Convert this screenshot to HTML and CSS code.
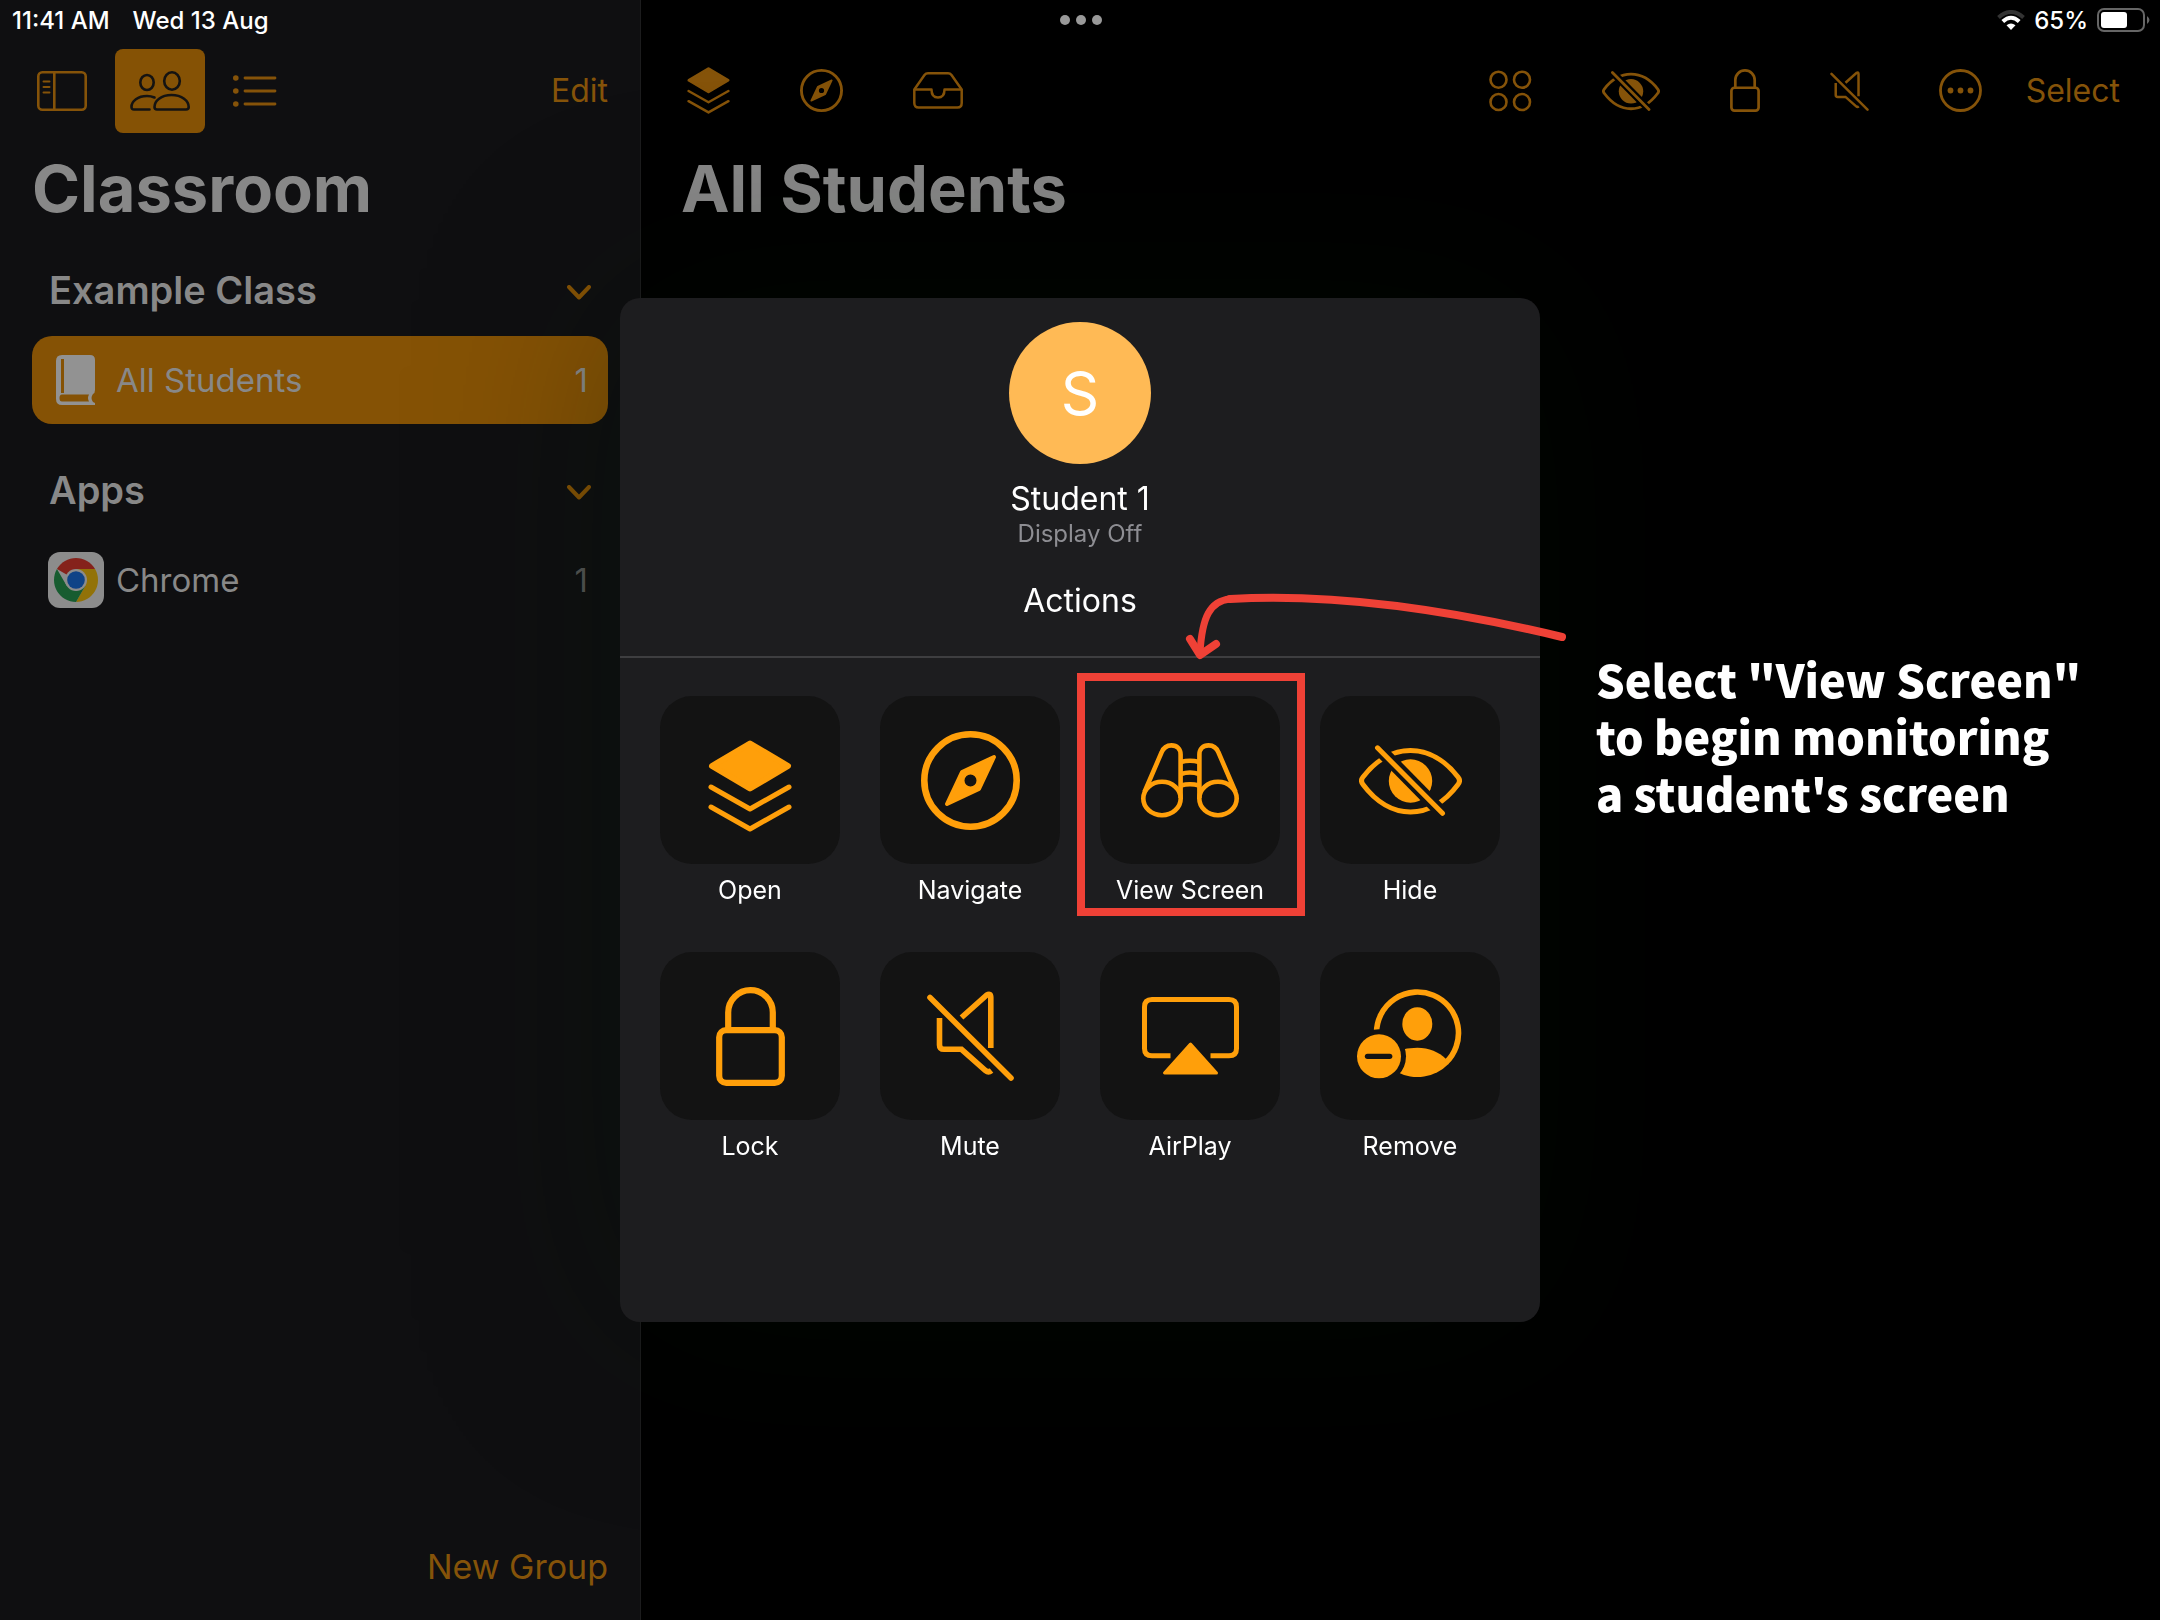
FILE: index.html
```html
<!DOCTYPE html>
<html lang="en">
<head>
    <meta charset="UTF-8">
    <meta name="viewport" content="width=device-width, initial-scale=1.0">
    <title>Classroom</title>
    <link rel="stylesheet" href="styles.css">
</head>
<body>
    <!-- icons used in both the toolbar and the action tiles -->
    <svg class="symbols" aria-hidden="true">
        <symbol id="icon-layers" viewBox="0 0 84 92">
            <path d="M42 3.500 80 26 42 48.500 4 26Z" fill="currentColor" stroke="currentColor" stroke-width="6" stroke-linejoin="round"/>
            <path d="M3 47 42 69 81 47M3 67 42 89 81 67" fill="none" stroke="currentColor" stroke-width="5" stroke-linecap="round" stroke-linejoin="round"/>
        </symbol>
        <symbol id="icon-compass" viewBox="0 0 99 99">
            <circle cx="49.500" cy="49.500" r="46.200" fill="none" stroke="currentColor" stroke-width="6.600"/>
            <path fill-rule="evenodd" d="M73 26 58 58 26 73 41 41ZM49.500 41.500a8 8 0 1 0 0 16 8 8 0 0 0 0-16Z" fill="currentColor" stroke="currentColor" stroke-width="4" stroke-linejoin="round"/>
        </symbol>
        <symbol id="icon-eye" viewBox="0 0 103 71">
            <mask id="eye-gap" maskUnits="userSpaceOnUse" x="0" y="0" width="103" height="71">
                <rect width="103" height="71" fill="#fff"/>
                <path d="M8-8.400 94 79" stroke="#000" stroke-width="13"/>
            </mask>
            <g mask="url(#eye-gap)">
                <path d="M4 39.500C2 37 2 34.500 4 32 17 15 34 5.500 51.500 5.500S86 15 99 32C101 34.500 101 37 99 39.500 86 57 69 67 51.500 67S17 57 4 39.500Z" fill="none" stroke="currentColor" stroke-width="5"/>
                <circle cx="51.500" cy="36" r="21.700" fill="currentColor"/>
            </g>
            <path d="M18.500 2.800 83.500 68.300" stroke="currentColor" stroke-width="5" stroke-linecap="round"/>
        </symbol>
        <symbol id="icon-lock" viewBox="0 0 69 99">
            <rect x="3.200" y="43.200" width="62.600" height="52.600" rx="7" fill="none" stroke="currentColor" stroke-width="6.200"/>
            <path d="M12.200 43V25.500a22.300 22.300 0 0 1 44.600 0V43" fill="none" stroke="currentColor" stroke-width="6.200"/>
        </symbol>
        <symbol id="icon-mute" viewBox="0 0 87 90">
            <g fill="none" stroke="currentColor" stroke-width="5.600">
                <path d="M34.500 26.500 59.500 4.200Q63.800 1.500 63.800 6.500V57"/>
                <path d="M12.500 27V54Q12.500 58.300 17 58.300H34.500L58.500 79.500Q61.500 82 64.500 79.500"/>
                <path d="M3 6.500 84 87" stroke-linecap="round"/>
            </g>
        </symbol>
    </svg>

    <div class="app">
        <header class="status">
            <div class="status-left">
                <span>11:41 AM</span>
                <span>Wed 13 Aug</span>
            </div>
            <div class="dots"><i></i><i></i><i></i></div>
            <div class="status-right">
                <svg width="28" height="20" viewBox="0 0 28 20" fill="none" stroke="#fff" stroke-width="4">
                    <path d="M1.500 7.500Q14-3.500 26.500 7.500" stroke="#333"/>
                    <path d="M5.800 11.500Q14 4 22.200 11.500"/>
                    <path d="M14 20 9.500 15.300Q14 11.800 18.500 15.300Z" fill="#fff" stroke="none"/>
                </svg>
                <span>65%</span>
                <svg width="53" height="24" viewBox="0 0 53 24">
                    <rect x="1" y="1" width="46" height="22" rx="6" fill="none" stroke="#666" stroke-width="2"/>
                    <rect x="4" y="4" width="26" height="16" rx="3" fill="#fff"/>
                    <path d="M50 8q5 4 0 8Z" fill="#666"/>
                </svg>
            </div>
        </header>

        <aside class="sidebar">
            <div class="toolbar">
                <button class="icon-btn" aria-label="Toggle sidebar">
                    <svg width="50" height="40" viewBox="0 0 50 40" fill="none" stroke="currentColor" stroke-width="2.600">
                        <rect x="1.300" y="1.300" width="47.400" height="37.400" rx="4"/>
                        <path d="M17.300 1V39"/>
                        <path d="M6.500 10.500H12.500M6.500 16H12.500M6.500 21.500H12.500" stroke-width="2" stroke-linecap="round"/>
                    </svg>
                </button>
                <button class="icon-btn active" aria-label="Students">
                    <svg width="60" height="40" viewBox="0 0 60 40" fill="none" stroke="currentColor" stroke-width="2.600" stroke-linecap="round">
                        <ellipse cx="42" cy="10" rx="7.800" ry="8.700"/>
                        <ellipse cx="17" cy="11.500" rx="6.700" ry="7.500"/>
                        <path d="M24.500 36C24.500 30 31 24 41.500 24S58.700 30 58.700 36Q58.700 38.500 56 38.500H27Q24.500 38.500 24.500 36Z"/>
                        <path d="M19.500 38.500H4Q1.500 38.500 1.500 36C1.500 30 8 25 17 25Q21 25 24.500 26.500"/>
                    </svg>
                </button>
                <button class="icon-btn" aria-label="List">
                    <svg width="44" height="32" viewBox="0 0 44 32">
                        <g fill="currentColor"><circle cx="2.800" cy="3" r="2.800"/><circle cx="2.800" cy="16" r="2.800"/><circle cx="2.800" cy="29" r="2.800"/></g>
                        <path d="M12 3H42M12 16H42M12 29H42" stroke="currentColor" stroke-width="2.800" stroke-linecap="round"/>
                    </svg>
                </button>
                <button class="text-btn push">Edit</button>
            </div>

            <h1 class="title">Classroom</h1>

            <section class="group">
                <h2 class="group-head">Example Class
                    <svg class="chevron" viewBox="0 0 24 15"><path d="M2 2 12 12.500 22 2"/></svg>
                </h2>
                <a class="row selected" href="#">
                    <svg class="row-icon" viewBox="0 0 56 56">
                        <path fill="#929292" fill-rule="evenodd" d="M14 3H42Q47 3 47 8V38Q47 41 45 42Q42 46 45 50L47 51V53H14Q8 53 8 47V9Q8 3 14 3ZM13 7V41H16V7ZM14 42.500Q11.500 42.500 11.500 46T14 49.500H41Q39 46 41 42.500Z"/>
                    </svg>
                    <span>All Students</span>
                    <span class="count">1</span>
                </a>
            </section>

            <section class="group">
                <h2 class="group-head">Apps
                    <svg class="chevron" viewBox="0 0 24 15"><path d="M2 2 12 12.500 22 2"/></svg>
                </h2>
                <a class="row" href="#">
                    <svg class="row-icon" viewBox="0 0 56 56">
                        <rect width="56" height="56" rx="12" fill="#8c8c8c"/>
                        <path d="M28 28 8.950 17A22 22 0 0 1 47.050 17Z" fill="#85221b"/>
                        <path d="M28 17H47.050A22 22 0 0 1 28 50L37.500 33.500Z" fill="#927208"/>
                        <path d="M8.950 17 18.500 33.500 28 39 37.500 33.500 28 50A22 22 0 0 1 8.950 17Z" fill="#175c30"/>
                        <path d="M28 17H47.050L37 30Z" fill="#927208"/>
                        <circle cx="28" cy="28" r="11" fill="#8c8c8c"/>
                        <circle cx="28" cy="28" r="8.800" fill="#0f4387"/>
                    </svg>
                    <span>Chrome</span>
                    <span class="count">1</span>
                </a>
            </section>

            <button class="text-btn new-group">New Group</button>
        </aside>

        <main class="main">
            <div class="toolbar">
                <div class="icons">
                    <button class="icon-btn" aria-label="Open"><svg width="43" height="47"><use href="#icon-layers"/></svg></button>
                    <button class="icon-btn" aria-label="Navigate"><svg width="43" height="43"><use href="#icon-compass"/></svg></button>
                    <button class="icon-btn" aria-label="Inbox">
                        <svg width="50" height="37" viewBox="0 0 50 37" fill="none" stroke="currentColor" stroke-width="2.500" stroke-linejoin="round">
                            <path d="M1.300 17.500 11.500 3Q12.800 1.300 15 1.300H35Q37.200 1.300 38.500 3L48.700 17.500V31Q48.700 35.500 44.500 35.500H5.500Q1.300 35.500 1.300 31Z"/>
                            <path d="M1.300 17.500H18.500Q18.500 25.500 25 25.500T31.500 17.500H48.700"/>
                        </svg>
                    </button>
                </div>
                <div class="icons push">
                    <button class="icon-btn" aria-label="Groups">
                        <svg width="43" height="42" viewBox="0 0 43 42" fill="none" stroke="currentColor" stroke-width="2.600">
                            <circle cx="9.500" cy="9.700" r="8"/><circle cx="33" cy="9.700" r="8"/><circle cx="9.500" cy="32" r="8"/><circle cx="33" cy="32" r="8"/>
                        </svg>
                    </button>
                    <button class="icon-btn" aria-label="Hide"><svg width="58" height="40"><use href="#icon-eye"/></svg></button>
                    <button class="icon-btn" aria-label="Lock"><svg width="30" height="43"><use href="#icon-lock"/></svg></button>
                    <button class="icon-btn" aria-label="Mute"><svg width="39" height="40"><use href="#icon-mute"/></svg></button>
                    <button class="icon-btn" aria-label="More">
                        <svg width="43" height="43" viewBox="0 0 43 43">
                            <circle cx="21.500" cy="21.500" r="20" fill="none" stroke="currentColor" stroke-width="2.800"/>
                            <g fill="currentColor"><circle cx="11.500" cy="21.500" r="2.900"/><circle cx="21.500" cy="21.500" r="2.900"/><circle cx="31.500" cy="21.500" r="2.900"/></g>
                        </svg>
                    </button>
                </div>
                <button class="text-btn">Select</button>
            </div>
            <h1 class="title">All Students</h1>
        </main>
    </div>

    <div class="overlay">
        <div class="modal" role="dialog" aria-label="Student 1">
            <div class="modal-head">
                <div class="avatar">S</div>
                <div class="name">Student 1</div>
                <div class="state">Display Off</div>
                <h2 class="actions-title">Actions</h2>
            </div>
            <div class="actions">
                <button class="action">
                    <span class="tile"><svg width="84" height="104"><use href="#icon-layers" y="12" width="84" height="92"/></svg></span>
                    Open
                </button>
                <button class="action">
                    <span class="tile"><svg width="99" height="99"><use href="#icon-compass"/></svg></span>
                    Navigate
                </button>
                <div class="callout">
                    <button class="action">
                        <span class="tile">
                            <svg width="98" height="75" viewBox="0 0 98 75" fill="none" stroke="currentColor" stroke-width="4.600">
                                <ellipse cx="21" cy="55.500" rx="18.700" ry="16.700"/>
                                <ellipse cx="77" cy="55.500" rx="18.700" ry="16.700"/>
                                <path d="M3.500 49 20.500 9.500C22.500 4.500 26 2.400 30.500 2.400 36 2.400 39.600 6 39.600 11.500V55"/>
                                <path d="M94.500 49 77.500 9.500C75.500 4.500 72 2.400 67.500 2.400 62 2.400 58.400 6 58.400 11.500V55"/>
                                <path d="M40 19Q49 16.500 58 19M40 31Q49 28 58 31M40 42.500Q49 40 58 42.500"/>
                            </svg>
                        </span>
                        View Screen
                    </button>
                    <div class="highlight"></div>
                    <svg class="arrow" viewBox="0 0 384 68" fill="none" stroke="#ef4136" stroke-linecap="round" stroke-linejoin="round">
                        <path d="M378 44C270 18 150 0 46 6" stroke-width="8"/>
                        <path d="M46 6C26 8 18 24 16 60" stroke-width="7"/>
                        <path d="M6 46 16 62 32 51" stroke-width="8"/>
                    </svg>
                    <p class="note">Select "View Screen"<br>to begin monitoring<br>a student's screen</p>
                </div>
                <button class="action">
                    <span class="tile"><svg width="103" height="71"><use href="#icon-eye"/></svg></span>
                    Hide
                </button>
                <button class="action">
                    <span class="tile"><svg width="69" height="99"><use href="#icon-lock"/></svg></span>
                    Lock
                </button>
                <button class="action">
                    <span class="tile"><svg width="87" height="90"><use href="#icon-mute"/></svg></span>
                    Mute
                </button>
                <button class="action">
                    <span class="tile">
                        <svg width="97" height="79" viewBox="0 0 97 79">
                            <path d="M28.500 58.800H10Q2.500 58.800 2.500 51.500V10Q2.500 2.500 10 2.500H87Q94.500 2.500 94.500 10V51.500Q94.500 58.800 87 58.800H68.500" fill="none" stroke="currentColor" stroke-width="5"/>
                            <path d="M48.500 47 22.500 76H74.500Z" fill="currentColor" stroke="currentColor" stroke-width="3" stroke-linejoin="round"/>
                        </svg>
                    </span>
                    AirPlay
                </button>
                <button class="action">
                    <span class="tile">
                        <svg width="106" height="94" viewBox="0 0 106 94">
                            <mask id="badge-gap" maskUnits="userSpaceOnUse" x="0" y="0" width="106" height="94">
                                <rect width="106" height="94" fill="#fff"/>
                                <circle cx="22" cy="67.300" r="27" fill="#000"/>
                            </mask>
                            <g mask="url(#badge-gap)">
                                <path d="M19.500 44.300A41 41 0 1 1 89 73.500" fill="none" stroke="currentColor" stroke-width="5.600"/>
                                <ellipse cx="60.300" cy="35" rx="15" ry="16.700" fill="currentColor"/>
                                <path d="M40 62Q50 58.700 60.300 58.700C72 58.700 82 63 89 70L91.500 75A43.800 43.800 0 0 1 40 83Z" fill="currentColor"/>
                            </g>
                            <circle cx="22" cy="67.300" r="22" fill="currentColor"/>
                            <path d="M10.500 67.300H32.700" stroke="#131313" stroke-width="5.300" stroke-linecap="round"/>
                        </svg>
                    </span>
                    Remove
                </button>
            </div>
        </div>
    </div>
</body>
</html>
```

FILE: styles.css
```css
*{
    box-sizing: border-box;
}

body{
    margin: 0;
    background-color: #000;
    font-family: Inter, "Liberation Sans", sans-serif;
    color: #888;
}

h1, h2, p{
    margin: 0;
}

button{
    padding: 0;
    border: none;
    background: none;
    font: inherit;
    color: inherit;
    cursor: pointer;
}

a{
    color: inherit;
    text-decoration: none;
}

svg{
    display: block;
}

.symbols{
    position: absolute;
    width: 0;
    height: 0;
}

.app{
    display: grid;
    grid-template-columns: 8fr 19fr;
    grid-template-rows: 40px 1fr;
    min-height: 100vh;
}

/* status bar */
.status{
    grid-area: 1 / 1 / 2 / 3;
    z-index: 1;
    display: grid;
    grid-template-columns: 1fr auto 1fr;
    align-items: center;
    padding: 0 10px 0 12px;
    font-size: 24px;
    font-weight: 500;
    color: #fff;
}

.status-left{
    display: flex;
    gap: 23px;
}

.status-right{
    display: flex;
    justify-content: flex-end;
    align-items: center;
    gap: 9px;
}

.dots{
    display: flex;
    gap: 6px;
}

.dots i{
    width: 10px;
    height: 10px;
    border-radius: 50%;
    background-color: #999;
}

/* sidebar */
.sidebar{
    grid-area: 1 / 1 / 3 / 2;
    display: flex;
    flex-direction: column;
    padding: 40px 32px 31px;
    background-color: #0f0f11;
}

.main{
    grid-area: 1 / 2 / 3 / 3;
    padding: 40px 40px 0;
    border-left: 1px solid #1c1c1d;
}

.toolbar{
    display: flex;
    align-items: center;
    gap: 44px;
    height: 101px;
    color: #855309;
}

.sidebar .toolbar{
    gap: 28px;
    padding-left: 5px;
}

.main .toolbar{
    padding-left: 6px;
}

.icons{
    display: flex;
    align-items: center;
    gap: 70px;
}

.push{
    margin-left: auto;
}

.active{
    display: grid;
    place-items: center;
    width: 90px;
    height: 84px;
    border-radius: 8px;
    background-color: #855205;
    color: #141312;
}

.text-btn{
    font-size: 32px;
    line-height: 44px;
    color: #855309;
}

.title{
    font-size: 65px;
    line-height: 95px;
    font-weight: 700;
    color: #888;
}

.group{
    margin-bottom: 40px;
}

.group-head{
    display: flex;
    justify-content: space-between;
    align-items: center;
    height: 72px;
    padding: 0 17px 20px;
    font-size: 38px;
    font-weight: 600;
}

.title + .group{
    margin-top: 28px;
}

.chevron{
    width: 24px;
    height: 15px;
    margin-top: 4px;
    fill: none;
    stroke: #855205;
    stroke-width: 4px;
    stroke-linecap: round;
    stroke-linejoin: round;
}

.row{
    display: flex;
    align-items: center;
    gap: 12px;
    height: 88px;
    padding: 0 20px 0 16px;
    border-radius: 20px;
    font-size: 33px;
}

.selected{
    background-color: #855205;
}

.row-icon{
    width: 56px;
    height: 56px;
}

.count{
    margin-left: auto;
    color: #555;
}

.selected .count{
    color: inherit;
}

.new-group{
    margin-top: auto;
    align-self: flex-end;
    font-size: 34px;
}

/* student dialog */
.overlay{
    position: fixed;
    inset: 0;
    z-index: 2;
    display: grid;
    place-items: center;
}

.modal{
    width: 920px;
    padding-bottom: 160px;
    border-radius: 20px;
    background-color: #1d1d1f;
    box-shadow: 0 0 200px rgba(0, 20, 0, .35);
    color: #fff;
}

.modal-head{
    display: flex;
    flex-direction: column;
    align-items: center;
    padding: 24px 0 35px;
    border-bottom: 2px solid #3e3e40;
}

.avatar{
    display: grid;
    place-items: center;
    width: 142px;
    height: 142px;
    margin-bottom: 15px;
    border-radius: 50%;
    background-color: #ffba55;
    font-size: 60px;
}

.name,
.actions-title{
    font-size: 32px;
    line-height: 40px;
    font-weight: 400;
}

.state{
    margin-bottom: 32px;
    font-size: 24px;
    line-height: 30px;
    color: #8e8e93;
}

.actions{
    display: grid;
    grid-template-columns: repeat(4, 1fr);
    gap: 46px 40px;
    padding: 38px 40px 0;
}

.action{
    width: 100%;
    font-size: 25px;
    line-height: 32px;
}

.tile{
    display: grid;
    place-items: center;
    height: 168px;
    margin-bottom: 10px;
    border-radius: 32px;
    background-color: #131313;
    color: #ff9f0a;
}

/* marks drawn over the dialog */
.callout{
    position: relative;
}

.highlight{
    position: absolute;
    inset: -23px -25px -10px -23px;
    border: 8px solid #ef4136;
    pointer-events: none;
}

.arrow{
    position: absolute;
    top: -103px;
    left: 84px;
    width: 384px;
    height: 68px;
}

.note{
    position: absolute;
    top: -46px;
    left: 496px;
    font-family: "Noto Sans CJK SC", "Noto Sans", sans-serif;
    font-size: 45px;
    line-height: 57px;
    font-weight: 900;
    white-space: nowrap;
}
```
